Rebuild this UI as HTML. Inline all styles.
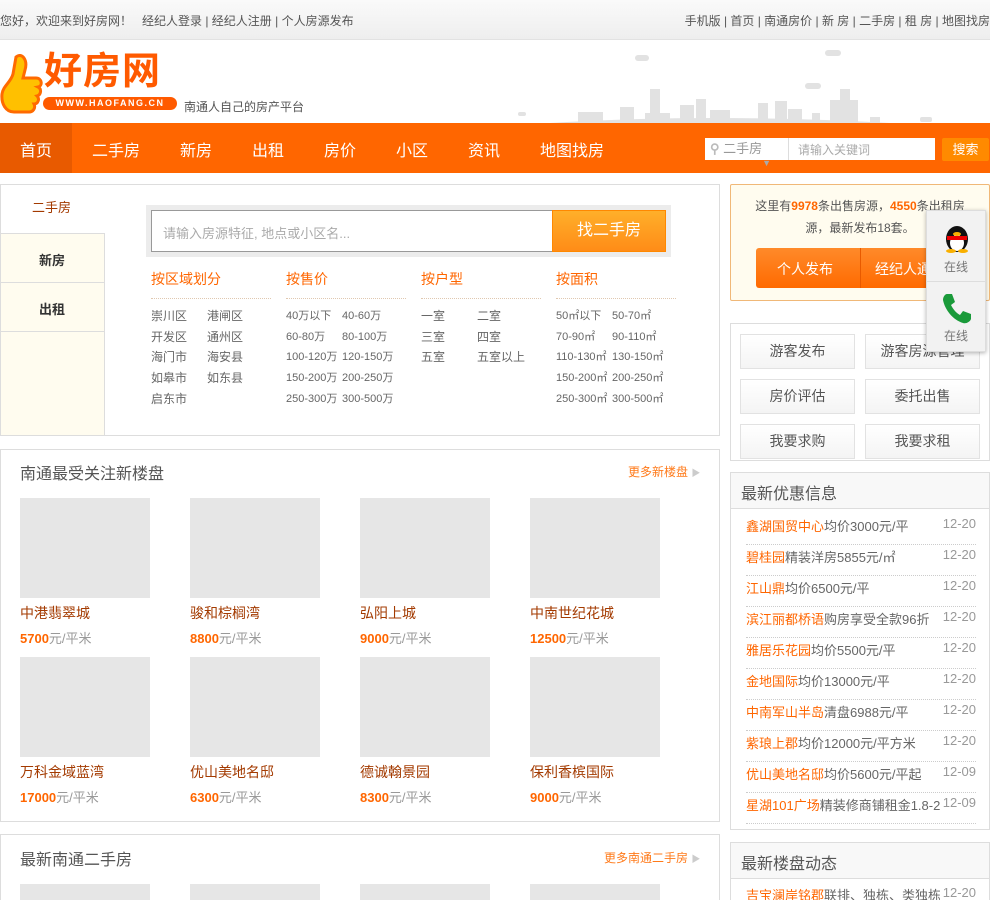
<!DOCTYPE html>
<html style="width:990px;height:900px;overflow:hidden"><head><meta charset="utf-8">
<style>
*{margin:0;padding:0;box-sizing:border-box}
body{width:990px;height:900px;overflow:hidden;background:#fff;font-family:"Liberation Sans","Noto Sans CJK SC",sans-serif;font-size:12px;color:#666;position:relative}
.a{position:absolute;white-space:nowrap}
.top{position:absolute;left:0;top:0;width:990px;height:40px;background:linear-gradient(#fafafa,#eeeeee);border-bottom:1px solid #e2e2e2}
.nav{position:absolute;left:0;top:123px;width:990px;height:50px;background:#ff6600}
.nav span{position:absolute;top:14px;color:#fff;font-size:16px}
.box{position:absolute;border:1px solid #ddd;background:#fff}
.cat{color:#ff6600;font-size:14px}
.dl{position:absolute;top:298px;width:120px;border-top:1px dotted #e0c8b0}
.img{position:absolute;width:130px;height:100px;background:#e6e6e6}
.nm{position:absolute;font-size:14px;color:#a33a00}
.pr{position:absolute;font-size:13px;color:#999}
.pr b{color:#ff6600}
.gb{position:absolute;width:115px;height:35px;border:1px solid #e2e2e2;background:linear-gradient(#fff,#f4f4f4);text-align:center;line-height:33px;font-size:14px;color:#555}
.li{position:absolute;left:746px;width:230px;height:31px;font-size:13px;color:#666;border-bottom:1px dotted #ccc;line-height:26px;overflow:hidden;white-space:nowrap}
.li i{font-style:normal;color:#ff6600}
.li s{text-decoration:none;position:absolute;right:0;top:-3px;color:#999;font-size:13px;background:#fff;padding-left:3px}
</style></head><body>
<div class="top"></div>
<div class="a" style="left:0;top:12px;color:#555">您好，欢迎来到好房网！&nbsp;&nbsp; 经纪人登录 | 经纪人注册 | 个人房源发布</div>
<div class="a" style="right:0;top:12px;color:#555">手机版 | 首页 | 南通房价 | 新 房 | 二手房 | 租 房 | 地图找房</div>

<!-- logo -->
<svg class="a" style="left:0;top:54px" width="44" height="62" viewBox="0 0 44 62"><path d="M16 3c6-5 12 3 9 13l-2 8h13c6 0 7 8 2 9 4 2 3 8-1 9 3 3 1 8-3 8 2 4-1 8-5 8H14C6 58 1 50 2 40c1-8 9-12 11-20z" fill="#ffc000" stroke="#ff6a00" stroke-width="3"/></svg>
<div class="a" style="left:44px;top:50px;font-size:38px;font-weight:bold;color:#ff5a00;letter-spacing:1px;line-height:44px">好房网</div>
<div class="a" style="left:43px;top:97px;width:134px;height:13px;border-radius:7px;background:#ff5a00;color:#fff;font-size:9px;font-weight:bold;text-align:center;line-height:13px;letter-spacing:1.5px">WWW.HAOFANG.CN</div>
<div class="a" style="left:184px;top:98px;font-size:12px;color:#555">南通人自己的房产平台</div>
<svg class="a" style="left:510px;top:45px" width="480" height="78" viewBox="0 0 480 78" fill="#e2e2e2">
<rect x="125" y="10" width="14" height="6" rx="3"/><rect x="315" y="5" width="16" height="6" rx="3"/><rect x="295" y="38" width="16" height="6" rx="3"/><rect x="8" y="67" width="8" height="4" rx="2"/><rect x="410" y="72" width="12" height="5" rx="2"/>
<path d="M40 78Q200 68 380 78Z"/>
<rect x="68" y="67" width="25" height="11"/><rect x="110" y="62" width="14" height="16"/><rect x="140" y="44" width="10" height="34"/><rect x="135" y="68" width="25" height="10"/>
<rect x="170" y="60" width="14" height="18"/><rect x="186" y="54" width="10" height="24"/><rect x="200" y="65" width="20" height="13"/>
<rect x="248" y="58" width="10" height="20"/><rect x="265" y="56" width="12" height="22"/><rect x="278" y="64" width="14" height="14"/><rect x="302" y="68" width="8" height="10"/>
<rect x="320" y="55" width="28" height="23"/><rect x="330" y="44" width="10" height="12"/><rect x="360" y="72" width="10" height="6"/>
</svg>

<div class="nav">
<div class="a" style="left:0;top:0;width:72px;height:50px;background:#e85a00"></div>
<span style="left:20px">首页</span><span style="left:92px">二手房</span><span style="left:180px">新房</span><span style="left:252px">出租</span><span style="left:324px">房价</span><span style="left:396px">小区</span><span style="left:468px">资讯</span><span style="left:540px">地图找房</span>
<div class="a" style="left:705px;top:15px;width:230px;height:22px;background:#fff"></div>
<div class="a" style="left:710px;top:18px;color:#999;font-size:13px;line-height:16px"><b style="color:#bbb">&#9906;</b> 二手房 <span style="font-size:9px;color:#aaa;vertical-align:middle">▼</span></div>
<div class="a" style="left:788px;top:15px;width:1px;height:22px;background:#ddd"></div>
<div class="a" style="left:798px;top:18px;color:#aaa;font-size:12px">请输入关键词</div>
<div class="a" style="left:942px;top:15px;width:47px;height:23px;background:#ff8a00;border-radius:2px;color:#fff;font-size:13px;text-align:center;line-height:23px">搜索</div>
</div>

<!-- left search panel -->
<div class="box" style="left:0;top:184px;width:720px;height:252px"></div>
<div class="a" style="left:1px;top:233px;width:104px;height:202px;background:#fffcef;border-right:1px solid #ddd;border-top:1px solid #ddd"></div>
<div class="a" style="left:1px;top:282px;width:104px;border-top:1px solid #ddd"></div>
<div class="a" style="left:1px;top:331px;width:104px;border-top:1px solid #ddd"></div>
<div class="a" style="left:32px;top:197px;color:#a33a00;font-size:13px">二手房</div>
<div class="a" style="left:39px;top:250px;color:#333;font-size:13px;font-weight:bold">新房</div>
<div class="a" style="left:39px;top:299px;color:#333;font-size:13px;font-weight:bold">出租</div>
<div class="a" style="left:146px;top:205px;width:525px;height:52px;background:#ececec"></div>
<div class="a" style="left:151px;top:210px;width:402px;height:42px;background:#fff;border:1px solid #999"></div>
<div class="a" style="left:163px;top:223px;color:#aaa;font-size:13px">请输入房源特征, 地点或小区名...</div>
<div class="a" style="left:552px;top:210px;width:114px;height:42px;background:linear-gradient(#ffaf2a,#ff8c17);border:1px solid #f80;color:#fff;font-size:16px;text-align:center;line-height:40px">找二手房</div>
<div class="a cat" style="left:151px;top:269px">按区域划分</div>
<div class="a cat" style="left:286px;top:269px">按售价</div>
<div class="a cat" style="left:421px;top:269px">按户型</div>
<div class="a cat" style="left:556px;top:269px">按面积</div>
<div class="dl" style="left:151px"></div><div class="dl" style="left:286px"></div><div class="dl" style="left:421px"></div><div class="dl" style="left:556px"></div>
<div class="a" style="left:151px;top:306px;line-height:20.7px">崇川区<br>开发区<br>海门市<br>如皋市<br>启东市</div>
<div class="a" style="left:207px;top:306px;line-height:20.7px">港闸区<br>通州区<br>海安县<br>如东县</div>
<div class="a" style="left:286px;top:306px;line-height:20.7px;font-size:11px">40万以下<br>60-80万<br>100-120万<br>150-200万<br>250-300万</div>
<div class="a" style="left:342px;top:306px;line-height:20.7px;font-size:11px">40-60万<br>80-100万<br>120-150万<br>200-250万<br>300-500万</div>
<div class="a" style="left:421px;top:306px;line-height:20.7px">一室<br>三室<br>五室</div>
<div class="a" style="left:477px;top:306px;line-height:20.7px">二室<br>四室<br>五室以上</div>
<div class="a" style="left:556px;top:306px;line-height:20.7px;font-size:11px">50㎡以下<br>70-90㎡<br>110-130㎡<br>150-200㎡<br>250-300㎡</div>
<div class="a" style="left:612px;top:306px;line-height:20.7px;font-size:11px">50-70㎡<br>90-110㎡<br>130-150㎡<br>200-250㎡<br>300-500㎡</div>

<!-- new buildings -->
<div class="box" style="left:0;top:449px;width:720px;height:373px"></div>
<div class="a" style="left:20px;top:460px;font-size:16px;color:#555">南通最受关注新楼盘</div>
<div class="a" style="left:628px;top:463px;color:#ff7a1a">更多新楼盘 <span style="color:#ccc;font-size:9px">▶</span></div>
<div class="img" style="left:20px;top:498px"></div><div class="img" style="left:190px;top:498px"></div><div class="img" style="left:360px;top:498px"></div><div class="img" style="left:530px;top:498px"></div>
<div class="nm" style="left:20px;top:603px">中港翡翠城</div><div class="nm" style="left:190px;top:603px">骏和棕榈湾</div><div class="nm" style="left:360px;top:603px">弘阳上城</div><div class="nm" style="left:530px;top:603px">中南世纪花城</div>
<div class="pr" style="left:20px;top:628px"><b>5700</b>元/平米</div><div class="pr" style="left:190px;top:628px"><b>8800</b>元/平米</div><div class="pr" style="left:360px;top:628px"><b>9000</b>元/平米</div><div class="pr" style="left:530px;top:628px"><b>12500</b>元/平米</div>
<div class="img" style="left:20px;top:657px"></div><div class="img" style="left:190px;top:657px"></div><div class="img" style="left:360px;top:657px"></div><div class="img" style="left:530px;top:657px"></div>
<div class="nm" style="left:20px;top:762px">万科金域蓝湾</div><div class="nm" style="left:190px;top:762px">优山美地名邸</div><div class="nm" style="left:360px;top:762px">德诚翰景园</div><div class="nm" style="left:530px;top:762px">保利香槟国际</div>
<div class="pr" style="left:20px;top:787px"><b>17000</b>元/平米</div><div class="pr" style="left:190px;top:787px"><b>6300</b>元/平米</div><div class="pr" style="left:360px;top:787px"><b>8300</b>元/平米</div><div class="pr" style="left:530px;top:787px"><b>9000</b>元/平米</div>

<div class="box" style="left:0;top:834px;width:720px;height:80px"></div>
<div class="a" style="left:20px;top:846px;font-size:16px;color:#555">最新南通二手房</div>
<div class="a" style="left:604px;top:849px;color:#ff7a1a">更多南通二手房 <span style="color:#ccc;font-size:9px">▶</span></div>
<div class="img" style="left:20px;top:884px;height:16px"></div><div class="img" style="left:190px;top:884px;height:16px"></div><div class="img" style="left:360px;top:884px;height:16px"></div><div class="img" style="left:530px;top:884px;height:16px"></div>

<!-- right -->
<div class="a" style="left:730px;top:184px;width:260px;height:117px;background:#fffcef;border:1px solid #f0b878;border-radius:2px"></div>
<div class="a" style="left:730px;top:195px;width:260px;text-align:center;font-size:12px;color:#555;line-height:22px;white-space:normal;padding:0 18px">这里有<b style="color:#ff6600">9978</b>条出售房源，<b style="color:#ff6600">4550</b>条出租房源，最新发布18套。</div>
<div class="a" style="left:756px;top:248px;width:210px;height:40px;background:linear-gradient(#ff8a2a,#ff6a00);border-radius:3px"></div>
<div class="a" style="left:860px;top:248px;width:1px;height:40px;background:#e85a00"></div>
<div class="a" style="left:777px;top:259px;color:#fff;font-size:14px">个人发布</div>
<div class="a" style="left:875px;top:259px;color:#fff;font-size:14px">经纪人通</div>

<div class="box" style="left:730px;top:323px;width:260px;height:138px"></div>
<div class="gb" style="left:740px;top:334px">游客发布</div><div class="gb" style="left:865px;top:334px">游客房源管理</div>
<div class="gb" style="left:740px;top:379px">房价评估</div><div class="gb" style="left:865px;top:379px">委托出售</div>
<div class="gb" style="left:740px;top:424px">我要求购</div><div class="gb" style="left:865px;top:424px">我要求租</div>

<div class="a" style="left:926px;top:210px;width:60px;height:142px;background:#f2f2f2;border:1px solid #ddd;box-shadow:0 1px 4px rgba(0,0,0,.3)"></div>
<div class="a" style="left:926px;top:281px;width:60px;border-top:1px solid #ddd"></div>
<svg class="a" style="left:942px;top:221px" width="30" height="32" viewBox="0 0 30 32"><ellipse cx="15" cy="18" rx="11" ry="13" fill="#111"/><ellipse cx="15" cy="22" rx="7" ry="8" fill="#fff"/><rect x="5" y="15" width="20" height="4" fill="#e00"/><ellipse cx="15" cy="13" rx="4" ry="2" fill="#f9b000"/><ellipse cx="9" cy="30" rx="5" ry="2" fill="#f9b000"/><ellipse cx="21" cy="30" rx="5" ry="2" fill="#f9b000"/></svg>
<div class="a" style="left:944px;top:258px;color:#777;font-size:12px">在线</div>
<svg class="a" style="left:941px;top:292px" width="30" height="32" viewBox="0 0 30 32"><path d="M6 2l5 0 3 8-4 3c2 4 5 8 9 10l3-4 8 3 0 5c-1 3-5 5-8 4C12 28 4 18 2 8 2 5 4 2 6 2z" fill="#1a9a3a"/></svg>
<div class="a" style="left:944px;top:327px;color:#777;font-size:12px">在线</div>

<div class="box" style="left:730px;top:472px;width:260px;height:358px"></div>
<div class="a" style="left:731px;top:473px;width:258px;height:36px;background:#f8f8f8;border-bottom:1px solid #ddd"></div>
<div class="a" style="left:741px;top:480px;font-size:16px;color:#555">最新优惠信息</div>
<div class="li" style="top:514px"><i>鑫湖国贸中心</i>均价3000元/平<s>12-20</s></div>
<div class="li" style="top:545px"><i>碧桂园</i>精装洋房5855元/㎡<s>12-20</s></div>
<div class="li" style="top:576px"><i>江山鼎</i>均价6500元/平<s>12-20</s></div>
<div class="li" style="top:607px"><i>滨江丽都桥语</i>购房享受全款96折<s>12-20</s></div>
<div class="li" style="top:638px"><i>雅居乐花园</i>均价5500元/平<s>12-20</s></div>
<div class="li" style="top:669px"><i>金地国际</i>均价13000元/平<s>12-20</s></div>
<div class="li" style="top:700px"><i>中南军山半岛</i>清盘6988元/平<s>12-20</s></div>
<div class="li" style="top:731px"><i>紫琅上郡</i>均价12000元/平方米<s>12-20</s></div>
<div class="li" style="top:762px"><i>优山美地名邸</i>均价5600元/平起<s>12-09</s></div>
<div class="li" style="top:793px"><i>星湖101广场</i>精装修商铺租金1.8-2.5<s>12-09</s></div>

<div class="box" style="left:730px;top:842px;width:260px;height:80px"></div>
<div class="a" style="left:731px;top:843px;width:258px;height:36px;background:#f8f8f8;border-bottom:1px solid #ddd"></div>
<div class="a" style="left:741px;top:850px;font-size:16px;color:#555">最新楼盘动态</div>
<div class="li" style="top:883px;border:none"><i>吉宝澜岸铭郡</i>联排、独栋、类独栋在<s>12-20</s></div>
</body></html>
